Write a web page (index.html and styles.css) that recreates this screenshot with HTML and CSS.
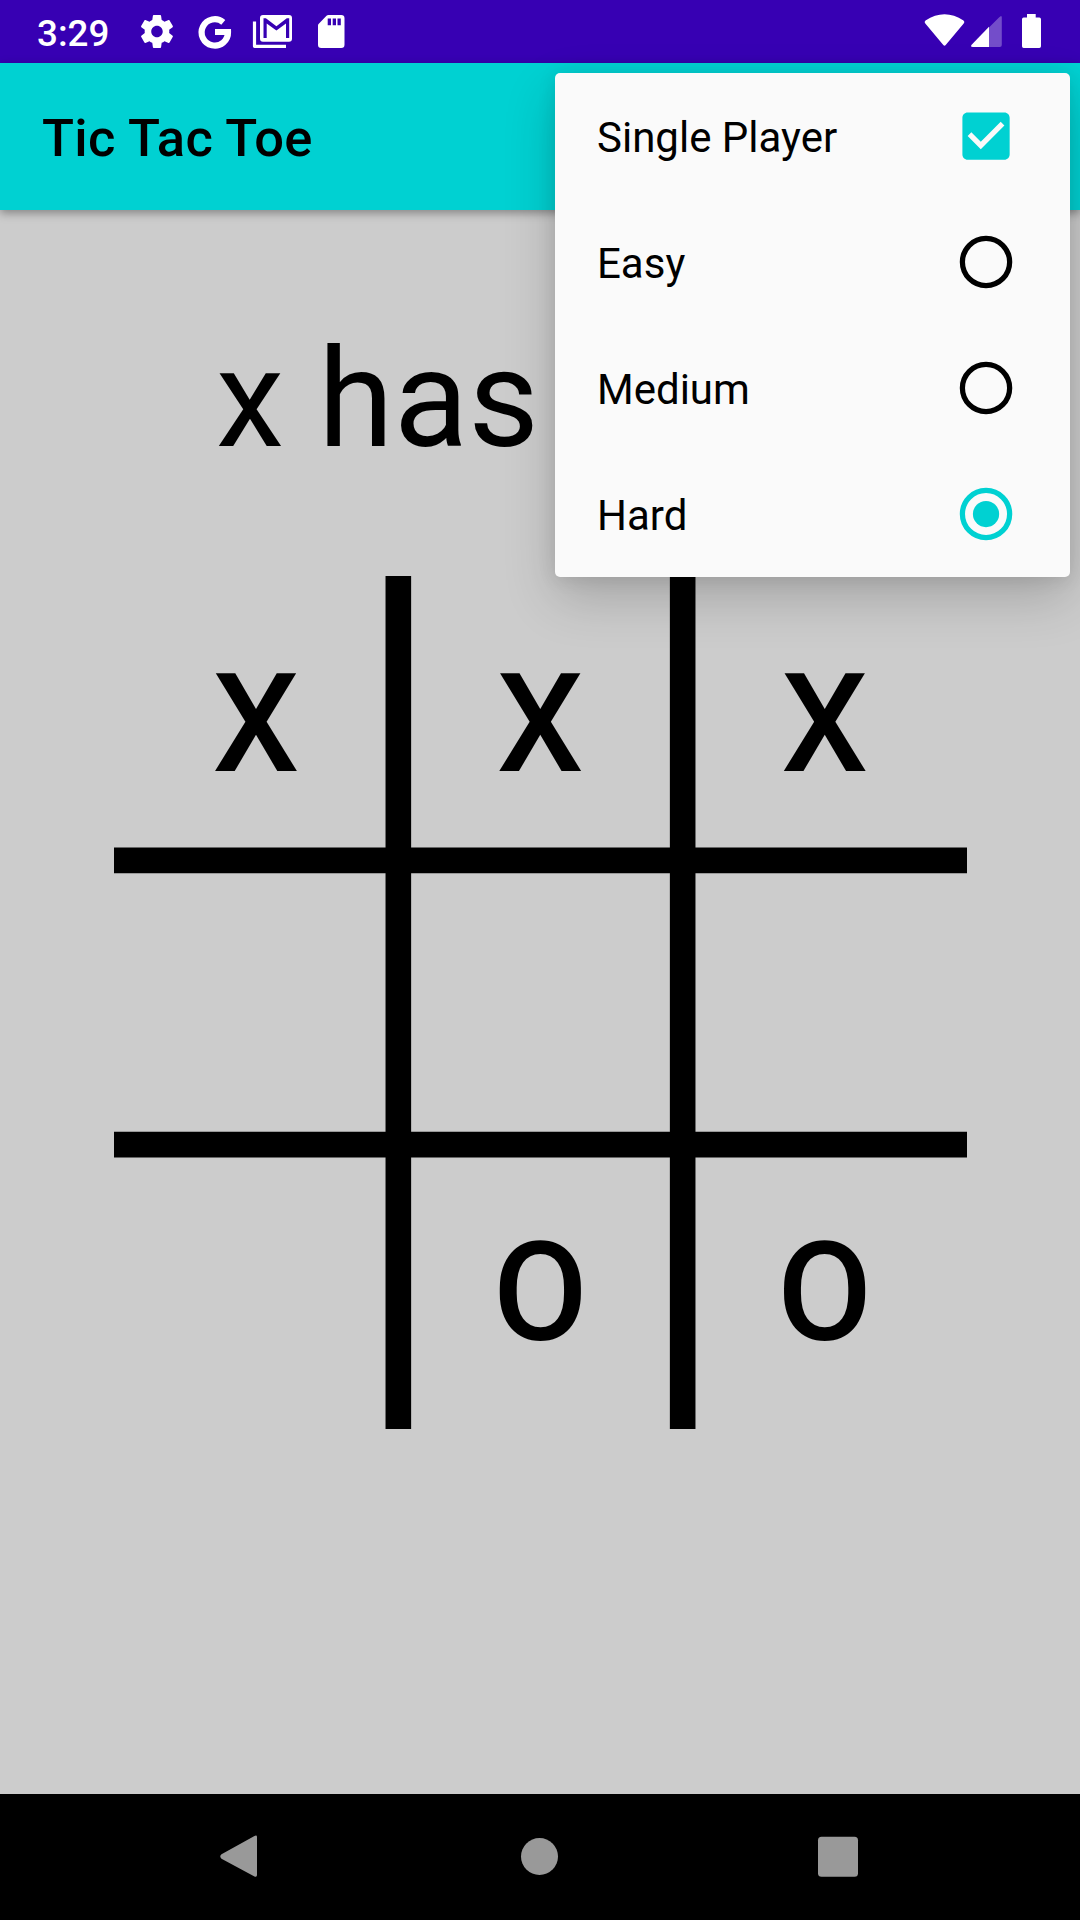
FILE: index.html
```html
<!DOCTYPE html>
<html lang="en">
<head>
<meta charset="utf-8">
<title>Tic Tac Toe</title>
<link rel="stylesheet" href="styles.css">
</head>
<body>
<div class="screen">
  <header class="status-bar">
    <span class="clock">3:29</span>
    <svg class="status-left" viewBox="0 0 220 63" fill="#fff">
      <path transform="translate(7.3 11.8) scale(1.64)" d="M19.43 12.98c.04-.32.07-.64.07-.98s-.03-.66-.07-.98l2.11-1.65c.19-.15.24-.42.12-.64l-2-3.46c-.12-.22-.39-.3-.61-.22l-2.49 1c-.52-.4-1.08-.73-1.69-.98l-.38-2.65C14.46 2.18 14.25 2 14 2h-4c-.25 0-.46.18-.49.42l-.38 2.65c-.61.25-1.17.59-1.69.98l-2.49-1c-.23-.09-.49 0-.61.22l-2 3.46c-.13.22-.07.49.12.64l2.11 1.65c-.04.32-.07.65-.07.98s.03.66.07.98l-2.11 1.65c-.19.15-.24.42-.12.64l2 3.46c.12.22.39.3.61.22l2.49-1c.52.4 1.08.73 1.69.98l.38 2.65c.03.24.24.42.49.42h4c.25 0 .46-.18.49-.42l.38-2.65c.61-.25 1.17-.59 1.69-.98l2.49 1c.23.09.49 0 .61-.22l2-3.46c.12-.22.07-.49-.12-.64l-2.11-1.65zM12 15.5c-1.93 0-3.500-1.570-3.500-3.500s1.570-3.500 3.500-3.500 3.500 1.570 3.500 3.500-1.570 3.500-3.500 3.500z"/>
      <path d="M93.300 22.300A13.200 13.200 0 1 0 98 32H85" fill="none" stroke="#fff" stroke-width="6.200"/>
      <path d="M124.500 21.500V46.300H156" fill="none" stroke="#fff" stroke-width="3.200" stroke-linejoin="round"/>
      <path fill-rule="evenodd" d="M133 15h26q3 0 3 3v20.700q0 3-3 3h-26q-3 0-3-3V18q0-3 3-3zM133.500 18.200V38h3.200V23.500l9.700 7 9.600-7V38h3.200V18.200h-2.400l-10.400 8-10.500-8z"/>
      <path fill-rule="evenodd" d="M198.500 15H211.200q3.300 0 3.300 3.300v26.400q0 3.300-3.300 3.300h-19.900q-3.300 0-3.300-3.300V25.500q0-1 .8-1.800l7.700-7.900q.8-.8 2-.8zM197.700 18.500v6.800h3.300v-6.800zM202.700 18.500v6.800h3.300v-6.800zM207.500 18.500v6.800h3.300v-6.800z"/>
    </svg>
    <svg class="status-right" viewBox="0 0 120 63" fill="#fff">
      <path d="M5.300 23.500Q3.700 21.800 5.500 20.500Q24.500 7.800 43.500 20.500Q45.300 21.800 43.700 23.500L25.700 45Q24.500 46.300 23.300 45z"/>
      <path d="M79 17.500q2.800-3 2.800 0V45q0 2-2 2H53q-3 0-1.300-2.200z" opacity=".3"/>
      <path d="M69 26.800V47H53q-3 0-1.300-2.200z"/>
      <path d="M107 14h8.700v3.500h3.600q1.700 0 1.700 1.700v27q0 1.700-1.700 1.700h-15.600q-1.700 0-1.700-1.700v-27q0-1.700 1.700-1.700h3.300z"/>
    </svg>
  </header>

  <div class="app-bar"><h1 class="title">Tic Tac Toe</h1></div>

  <main class="content">
    <p class="result">x has</p>
    <div class="board">
      <svg class="board-lines" viewBox="0 0 853 853" stroke="#000" stroke-width="25.600">
        <path d="M284.330 0V853M568.670 0V853M0 284.330H853M0 568.670H853"/>
      </svg>
      <span class="cell">X</span><span class="cell">X</span><span class="cell">X</span>
      <span class="cell"></span><span class="cell"></span><span class="cell"></span>
      <span class="cell"></span><span class="cell">O</span><span class="cell">O</span>
    </div>
  </main>

  <nav class="nav-bar">
    <svg class="nav-icon" viewBox="0 0 63 63"><path d="M11.500 33.700Q9 31.500 11.500 29.300L44 11.200Q47 9.500 47 12V50Q47 52.800 44 51.300z"/></svg>
    <svg class="nav-icon" viewBox="0 0 63 63"><circle cx="31.500" cy="31.500" r="18.500"/></svg>
    <svg class="nav-icon" viewBox="0 0 63 63"><rect x="12" y="11.700" width="40" height="40" rx="3.500"/></svg>
  </nav>

  <div class="menu">
    <div class="menu-item"><span>Single Player</span>
      <svg class="control on" viewBox="-.2 -.2 24 24"><path d="M19 3H5c-1.110 0-2 .9-2 2v14c0 1.100.89 2 2 2h14c1.110 0 2-.9 2-2V5c0-1.100-.89-2-2-2zm-9 14l-5-5 1.410-1.410L10 14.170l7.590-7.590L19 8l-9 9z"/></svg></div>
    <div class="menu-item"><span>Easy</span>
      <svg class="control" viewBox="-.2 -.2 24 24"><circle class="ring" cx="12" cy="12" r="9"/></svg></div>
    <div class="menu-item"><span>Medium</span>
      <svg class="control" viewBox="-.2 -.2 24 24"><circle class="ring" cx="12" cy="12" r="9"/></svg></div>
    <div class="menu-item"><span>Hard</span>
      <svg class="control on" viewBox="-.2 -.2 24 24"><circle class="ring" cx="12" cy="12" r="9"/><circle cx="12" cy="12" r="5"/></svg></div>
  </div>
</div>
</body>
</html>
```
FILE: styles.css
```css
* { box-sizing: border-box; }

body {
  margin: 0;
  font-family: Roboto, "Noto Sans", sans-serif;
  color: #000;
}

.screen {
  position: relative;
  display: flex;
  flex-direction: column;
  width: 1080px;
  height: 1920px;
  overflow: hidden;
  background: #ccc;
}

.status-bar {
  display: flex;
  flex: none;
  align-items: center;
  height: 63px;
  padding: 0 39px 0 37px;
  background: #3700b3;
}

.clock {
  width: 93px;
  padding-top: 3px;
  color: #fff;
  font-size: 36.75px;
  font-weight: 500;
  line-height: 43px;
}

.status-left { width: 220px; height: 63px; }

.status-right {
  width: 120px;
  height: 63px;
  margin-left: auto;
  margin-right: 1px;
  overflow: visible;
}

.app-bar {
  display: flex;
  flex: none;
  align-items: center;
  height: 147px;
  padding-left: 42px;
  background: #00d1d2;
  box-shadow: 0 3px 9px rgba(0, 0, 0, .36);
}

.title {
  margin: 0;
  padding-top: 3px;
  font-size: 52.5px;
  font-weight: 500;
  line-height: 62px;
  letter-spacing: .33px;
}

.content {
  display: flex;
  flex: 1;
  flex-direction: column;
  align-items: center;
}

.result {
  align-self: flex-start;
  margin: 108px 0 0;
  padding-left: 216px;
  height: 258px;
  font-size: 137.2px;
  line-height: 162px;
  white-space: nowrap;
}

.board {
  position: relative;
  display: grid;
  grid-template-columns: repeat(3, 1fr);
  grid-template-rows: repeat(3, 1fr);
  width: 853px;
  height: 853px;
}

.board-lines {
  position: absolute;
  inset: 0;
  width: 853px;
  height: 853px;
}

.cell {
  display: flex;
  align-items: center;
  justify-content: center;
  padding: 12px 0 0 .5px;
  font-size: 137.5px;
  font-weight: 500;
  line-height: 162px;
}

.nav-bar {
  display: flex;
  flex: none;
  align-items: center;
  justify-content: center;
  gap: 235px;
  height: 126px;
  padding: 0 1px 1px 0;
  background: #000;
}

.nav-icon { width: 63px; height: 63px; fill: #999; }

.menu {
  position: absolute;
  top: 73px;
  right: 10px;
  width: 515px;
  border-radius: 5px;
  background: #fafafa;
  box-shadow: 0 21px 52px rgba(0, 0, 0, .19), 0 2px 18px rgba(0, 0, 0, .1);
}

.menu-item {
  display: flex;
  align-items: center;
  justify-content: space-between;
  height: 126px;
  padding: 0 53px 1px 42px;
  font-size: 42px;
  line-height: 50px;
}

.menu-item span { padding-top: 5px; }

.control { width: 63px; height: 63px; fill: #000; stroke: #000; }
.control.on { fill: #00d1d2; stroke: #00d1d2; }
.control path, .control circle { stroke: none; }
.control .ring { fill: none; stroke: inherit; stroke-width: 2; }
```
